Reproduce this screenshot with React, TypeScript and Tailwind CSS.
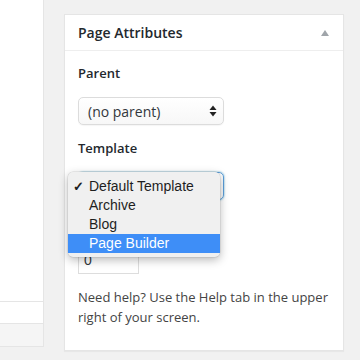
import React from "react"

const wp = { fontFamily: '"Open Sans", "Noto Sans", sans-serif' }
const mac = { fontFamily: '"Liberation Sans", Arial, sans-serif' }

function UpDown() {
  return (
    <svg width="8" height="12" viewBox="0 0 8 12" className="shrink-0">
      <path d="M4 0.5 L7.5 5 L0.5 5 Z" fill="#222" />
      <path d="M4 11.5 L7.5 7 L0.5 7 Z" fill="#222" />
    </svg>
  )
}

function FakeSelect({ label, focused }: { label: string; focused?: boolean }) {
  return (
    <div
      className={
        "flex items-center justify-between w-[146px] h-[28px] pl-[9px] pr-[6px] rounded-[5px] bg-gradient-to-b from-white to-[#f7f7f7] text-[14px] text-[#32373c] " +
        (focused
          ? "border border-[#5b9dd9] shadow-[0_0_2px_rgba(30,140,190,0.8)]"
          : "border border-[#dcdcdc] shadow-[0_1px_1px_rgba(0,0,0,0.04)]")
      }
      style={wp}
    >
      <span>{label}</span>
      <UpDown />
    </div>
  )
}

function Label({ children, hidden }: { children: React.ReactNode; hidden?: boolean }) {
  return (
    <p className={"text-[13px] leading-[20px] font-semibold text-[#23282d]" + (hidden ? " invisible" : "")}>
      {children}
    </p>
  )
}

export default function App() {
  const items = ["Default Template", "Archive", "Blog", "Page Builder"]

  return (
    <div className="relative w-[360px] h-[360px] overflow-hidden bg-[#f1f1f1] flex" style={wp}>
      {/* left column edge */}
      <div className="w-[44px] shrink-0 flex flex-col">
        <div className="h-[301px] bg-white border-r border-[#e5e5e5]" />
        <div className="h-[23px] bg-white border-y border-r border-[#e5e5e5]" />
        <div className="h-[23px] bg-[#f5f5f5] border-b border-r border-[#e5e5e5]" />
      </div>

      {/* Page Attributes metabox */}
      <div className="ml-[20px] mt-[14px] w-[280px] h-[337px] shrink-0 bg-white border border-[#e5e5e5] shadow-[0_1px_1px_rgba(0,0,0,0.04)] flex flex-col">
        <div className="h-[36px] shrink-0 border-b border-[#eeeeee] flex items-center justify-between pl-[13px] pr-[14px]">
          <h2 className="text-[14px] font-semibold text-[#23282d] leading-[20px]">Page Attributes</h2>
          <svg width="8" height="6" viewBox="0 0 8 6">
            <path d="M4 0 L8 6 L0 6 Z" fill="#a0a5aa" />
          </svg>
        </div>

        <div className="flex flex-col pt-[12px] px-[13px]">
          <Label>Parent</Label>
          <div className="mt-[14px]">
            <FakeSelect label="(no parent)" />
          </div>

          <div className="mt-[13px]">
            <Label>Template</Label>
          </div>
          {/* covered by the open menu */}
          <div className="mt-[14px]">
            <FakeSelect label="" focused />
          </div>

          <div className="mt-[12px]">
            <Label hidden>Order</Label>
          </div>
          <div className="mt-[14px] w-[61px] h-[28px] border border-[#dddddd] bg-white flex items-center pl-[5px] text-[14px] text-[#32373c]" style={mac}>
            0
          </div>

          <p className="mt-[13px] text-[13px] leading-[20px] text-[#444444]">
            Need help? Use the Help tab in the upper right of your screen.
          </p>
        </div>
      </div>

      {/* open native dropdown menu */}
      <div
        className="absolute left-[68px] top-[172px] w-[152px] pt-[5px] pb-[4px] rounded-[5px] bg-[#f0f0f0] shadow-[0_3px_10px_rgba(0,0,0,0.28),0_0_0_0.5px_rgba(0,0,0,0.12)]"
        style={mac}
      >
        {items.map((it, i) => (
          <div
            key={it}
            className={
              "h-[19px] flex items-center text-[14px] leading-[19px] " +
              (i === 3 ? "bg-[#3e8ef7] text-white" : "text-[#1e1e1e]")
            }
          >
            <span className="w-[21px] pl-[5px] text-[13px] font-bold">{i === 0 ? "✓" : ""}</span>
            <span>{it}</span>
          </div>
        ))}
      </div>
    </div>
  )
}
